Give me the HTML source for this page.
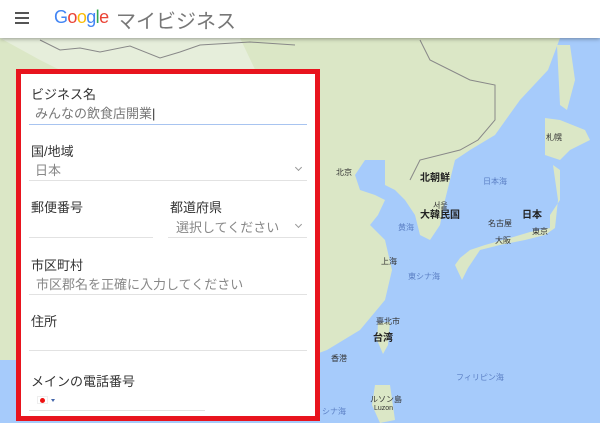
<!DOCTYPE html>
<html><head><meta charset="utf-8"><style>
*{margin:0;padding:0;box-sizing:border-box}
body{width:600px;height:423px;overflow:hidden;position:relative;background:#a6cbfb;font-family:"Liberation Sans","Noto Sans CJK JP",sans-serif}
#map{position:absolute;left:0;top:0}
.hdr{position:absolute;left:0;top:0;width:600px;height:38px;background:#fff;box-shadow:0 1px 4px rgba(0,0,0,.35);z-index:3}
.ham{position:absolute;left:15px;top:12px;width:14px}
.ham i{display:block;height:2px;background:#555;margin-bottom:3px}
.logo{position:absolute;left:54px;top:7px;font-size:18px;letter-spacing:-0.6px}
.title{position:absolute;left:116px;top:5px;font-size:20px;color:#777}
.frame{position:absolute;left:16px;top:69px;width:304px;height:352px;border:5px solid #e8141e;background:#fff;z-index:2}
.t{position:absolute;font-size:13px;color:#333;white-space:nowrap}
.p{position:absolute;font-size:13px;color:#888;white-space:nowrap}
.l{position:absolute;height:1px;background:#e2e2e2}
.cv{position:absolute;width:5px;height:5px;border-right:1px solid #999;border-bottom:1px solid #999;transform:rotate(45deg)}
</style></head><body>
<svg id="map" width="600" height="423">
<polygon fill="#dbe7c6" points="0,38 560,38 548,70 520,100 495,135 470,150 455,160 445,200 440,225 430,240 420,235 415,215 405,200 395,190 385,185 385,160 365,160 355,175 360,190 375,195 385,200 378,215 370,225 385,240 392,270 385,300 360,330 327,350 300,360 0,360"/>
<polygon fill="#dbe7c6" points="557,45 570,45 575,80 567,110 560,105"/>
<polygon fill="#dbe7c6" points="545,118 560,120 585,130 590,140 570,150 560,160 545,155"/>
<polygon fill="#dbe7c6" points="553,165 560,170 560,200 550,215 550,228 530,232 510,238 485,245 470,250 460,258 455,265 462,280 468,268 480,250 500,245 525,240 545,235 555,228 558,200"/>
<polygon fill="#dbe7c6" points="378,323 390,322 388,345 383,354 377,340"/>
<polygon fill="#dbe7c6" points="375,385 390,385 395,420 380,423 372,405"/>
<polygon fill="#e6eedb" points="0,38 240,38 260,80 240,120 200,130 160,110 100,90 40,60"/>
<polyline fill="none" stroke="#888" stroke-width="1" points="40,40 60,50 80,48 100,52 130,46 160,58 180,52 200,45 250,42 295,45"/>
<polyline fill="none" stroke="#888" stroke-width="1" points="420,40 430,60 470,80 495,85 495,120 478,140 460,150 420,160 410,180"/>
<text x="336" y="175" font-size="8" fill="#333">北京</text>
<text x="420" y="181" font-size="10" font-weight="bold" fill="#222">北朝鮮</text>
<text x="420" y="218" font-size="10" font-weight="bold" fill="#222">大韓民国</text>
<text x="433" y="208" font-size="8" fill="#333">서울</text>
<text x="483" y="184" font-size="8" fill="#5b7fc4">日本海</text>
<text x="522" y="218" font-size="10" font-weight="bold" fill="#222">日本</text>
<text x="488" y="226" font-size="8" fill="#333">名古屋</text>
<text x="495" y="243" font-size="8" fill="#333">大阪</text>
<text x="532" y="234" font-size="8" fill="#333">東京</text>
<text x="546" y="140" font-size="8" fill="#333">札幌</text>
<text x="398" y="230" font-size="8" fill="#5b7fc4">黄海</text>
<text x="381" y="264" font-size="8" fill="#333">上海</text>
<text x="408" y="279" font-size="8" fill="#5b7fc4">東シナ海</text>
<text x="376" y="324" font-size="8" fill="#333">臺北市</text>
<text x="373" y="341" font-size="10" font-weight="bold" fill="#222">台湾</text>
<text x="331" y="361" font-size="8" fill="#333">香港</text>
<text x="456" y="380" font-size="8" fill="#5b7fc4">フィリピン海</text>
<text x="370" y="402" font-size="8" fill="#333">ルソン島</text>
<text x="374" y="410" font-size="7" fill="#333">Luzon</text>
<text x="322" y="414" font-size="8" fill="#5b7fc4">シナ海</text>
</svg>
<div class="hdr">
<div class="ham"><i></i><i></i><i></i></div>
<div class="logo"><span style="color:#4285f4">G</span><span style="color:#ea4335">o</span><span style="color:#fbbc05">o</span><span style="color:#4285f4">g</span><span style="color:#34a853">l</span><span style="color:#ea4335">e</span></div>
<div class="title">マイビジネス</div>
</div>
<div class="frame">
<div class="t" style="left:10px;top:10px">ビジネス名</div>
<div class="p" style="left:14px;top:29px;color:#777">みんなの飲食店開業<span style="color:#333">|</span></div>
<div class="l" style="left:8px;top:50px;width:278px;background:#a8c4f0;height:1px"></div>
<div class="t" style="left:10px;top:67px">国/地域</div>
<div class="p" style="left:14px;top:86px">日本</div>
<div class="cv" style="left:275px;top:91px"></div>
<div class="l" style="left:8px;top:106px;width:278px"></div>
<div class="t" style="left:10px;top:123px">郵便番号</div>
<div class="t" style="left:149px;top:123px">都道府県</div>
<div class="p" style="left:155px;top:143px">選択してください</div>
<div class="cv" style="left:275px;top:148px"></div>
<div class="l" style="left:8px;top:163px;width:124px"></div>
<div class="l" style="left:147px;top:163px;width:139px"></div>
<div class="t" style="left:10px;top:181px">市区町村</div>
<div class="p" style="left:15px;top:200px">市区郡名を正確に入力してください</div>
<div class="l" style="left:8px;top:220px;width:278px"></div>
<div class="t" style="left:10px;top:237px">住所</div>
<div class="l" style="left:8px;top:276px;width:278px"></div>
<div class="t" style="left:10px;top:297px">メインの電話番号</div>
<div style="position:absolute;left:16px;top:322px;width:11px;height:8px;background:#fff;border:1px solid #eee"><div style="width:5px;height:5px;border-radius:50%;background:#e11;margin:1px auto"></div></div>
<div style="position:absolute;left:30px;top:325px;border-left:2px solid transparent;border-right:2px solid transparent;border-top:3px solid #4466aa"></div>
<div class="l" style="left:8px;top:336px;width:176px"></div>
</div>
</body></html>
